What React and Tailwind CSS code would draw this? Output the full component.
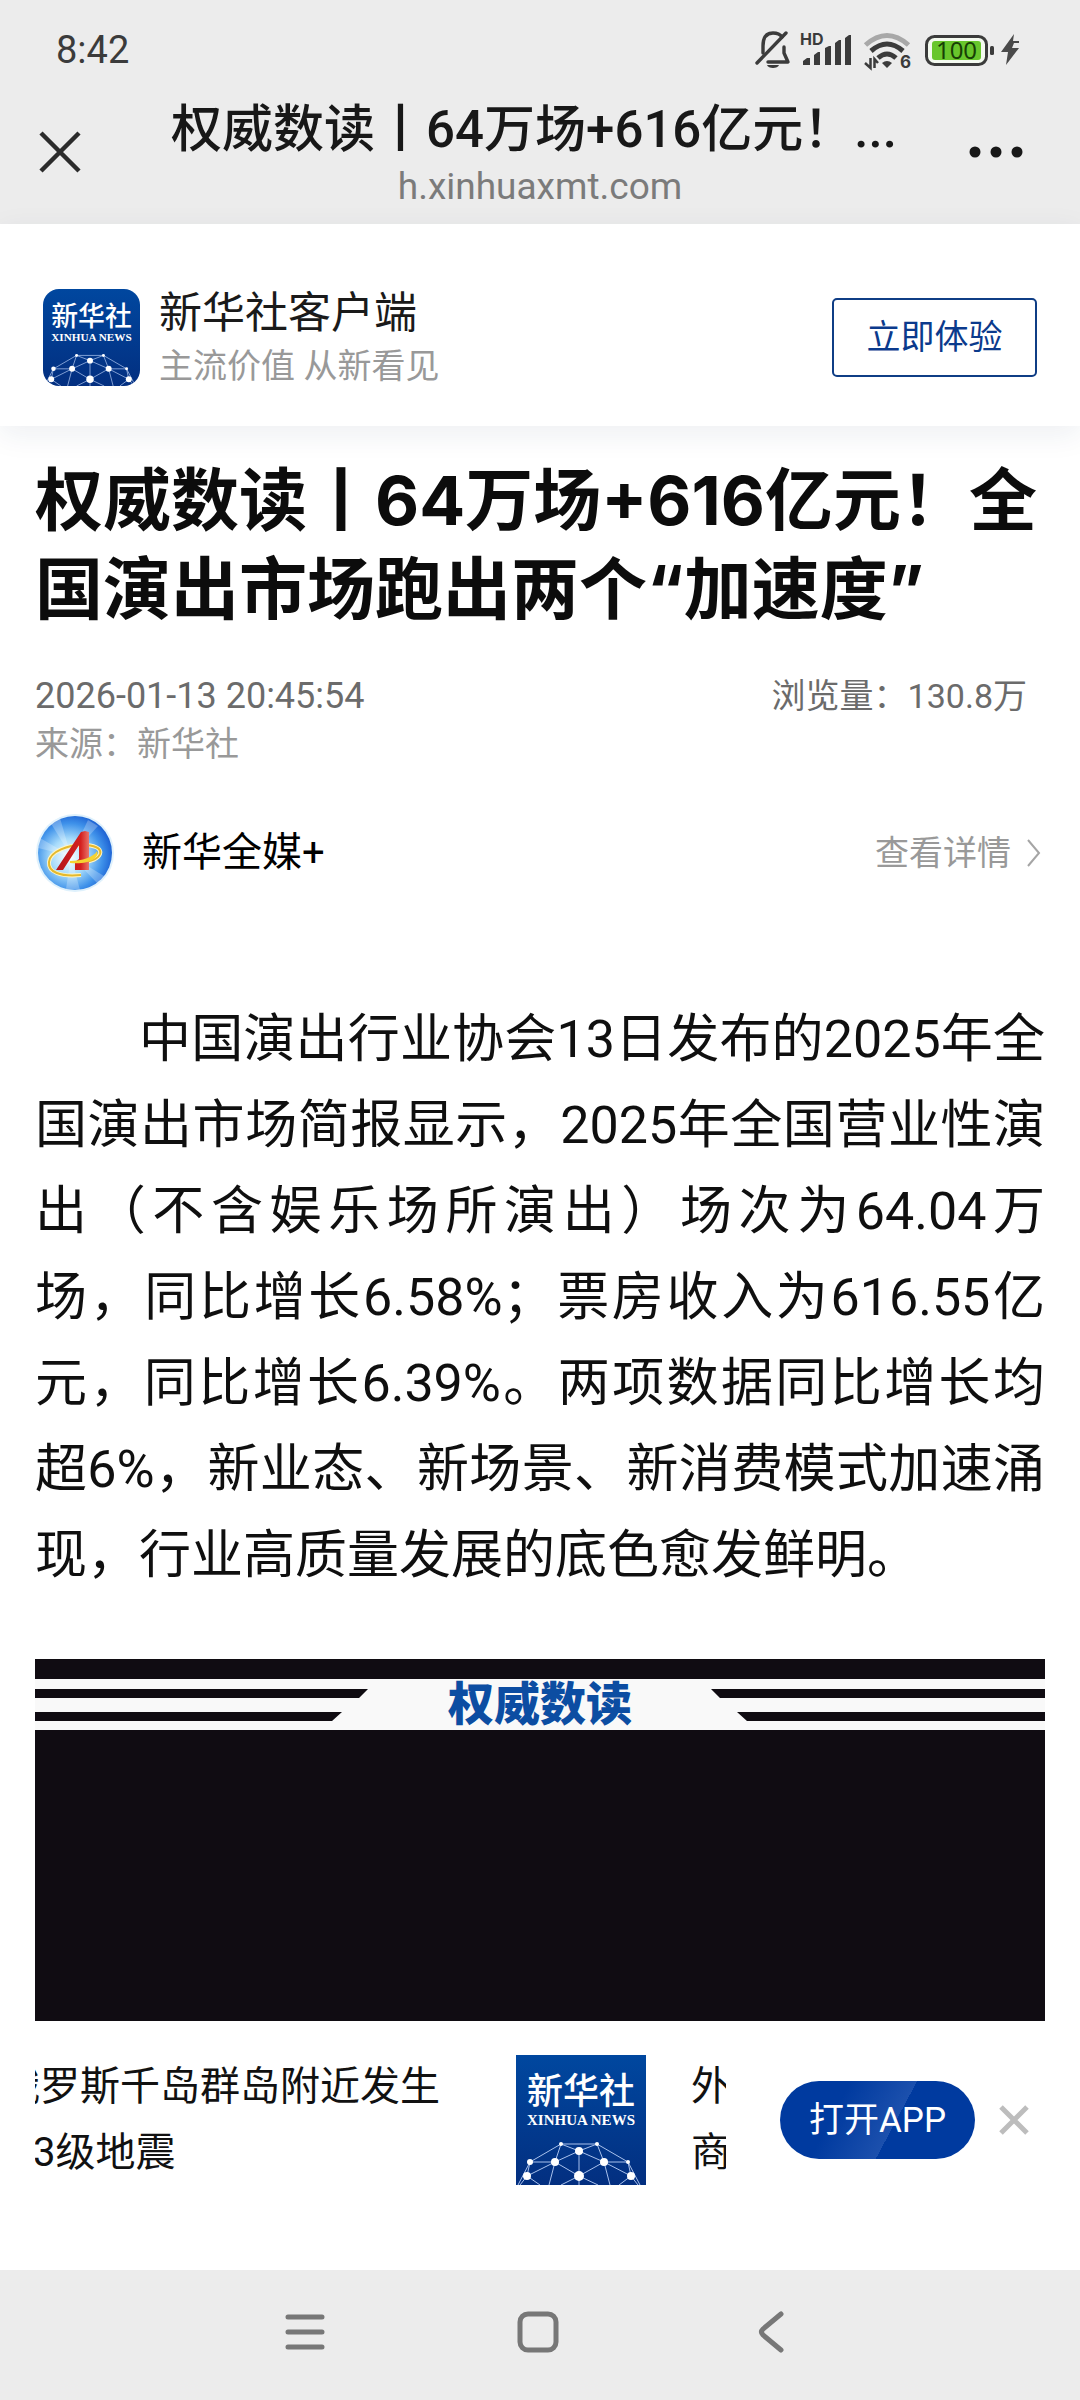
import React, { useId } from 'react';

const NODES = [
  [45, 89, 2], [81, 89, 2], [63, 96, 4], [14, 107, 3], [39, 107, 4],
  [88, 107, 4], [112, 107, 2], [11, 121, 4], [63, 121, 5], [115, 121, 4],
];

const LINKS = 'M45 89H81L112 107L124 130M45 89L14 107L2 130M14 107H39L45 89M81 89L88 107H112M63 96L39 107L33 130M63 96L88 107L94 130M63 96V130M45 89L63 96L81 89M39 107L11 121L14 107M88 107L115 121L112 107M39 107L63 121L88 107M63 121L45 130M63 121L82 130M11 121L4 130M11 121L24 130M115 121L122 130M115 121L103 130';

function XinhuaLogo({ className }) {
  const id = useId();
  return (
    <svg viewBox="0 0 130 130" className={className} role="img" aria-label="新华社">
      <defs>
        <linearGradient id={id} x1="0" y1="0" x2="0" y2="1">
          <stop offset="0" stopColor="#00479f" />
          <stop offset="1" stopColor="#032f80" />
        </linearGradient>
      </defs>
      <rect width="130" height="130" fill={`url(#${id})`} />
      <text x="65" y="49" textAnchor="middle" fontSize="36" fontWeight="500" fill="#fff" fontFamily="Noto Sans CJK SC, sans-serif">新华社</text>
      <text x="65" y="70" textAnchor="middle" fontSize="15" fontWeight="700" fill="#fff" fontFamily="Liberation Serif, serif">XINHUA NEWS</text>
      <path d={LINKS} stroke="#a9c1ec" strokeWidth="1" fill="none" />
      {NODES.map(([x, y, r]) => <circle key={`${x}-${y}`} cx={x} cy={y} r={r} fill="#fff" />)}
    </svg>
  );
}

function MediaAvatar() {
  return (
    <svg viewBox="0 0 78 78" className="size-[78px] shrink-0" role="img" aria-label="新华全媒+">
      <defs>
        <radialGradient id="sky" cx="0.42" cy="0.55" r="0.6">
          <stop offset="0" stopColor="#ffffff" />
          <stop offset="0.4" stopColor="#a8dcfb" />
          <stop offset="0.75" stopColor="#3f92ea" />
          <stop offset="1" stopColor="#1b5fd2" />
        </radialGradient>
        <linearGradient id="red" x1="0" y1="0" x2="1" y2="0">
          <stop offset="0" stopColor="#b3151c" />
          <stop offset="0.75" stopColor="#d4201f" />
          <stop offset="1" stopColor="#e9756a" />
        </linearGradient>
      </defs>
      <circle cx="39" cy="39" r="39" fill="#dff1fc" />
      <circle cx="39" cy="39" r="37" fill="url(#sky)" />
      <g fill="#fff" opacity="0.25">
        <path d="M35 42L14 8L24 4Z" />
        <path d="M35 42L4 24L2 34Z" />
        <path d="M35 42L52 6L62 12Z" />
        <path d="M35 42L30 75L44 76Z" />
        <path d="M35 42L68 62L62 70Z" />
      </g>
      <path d="M45 61C24 63 12 58 13 48C14 37 33 31 46 31C58 31 66 34 64 40C62 45 53 48 44 49" fill="none" stroke="#fff6c4" strokeWidth="4" />
      <path d="M45 61C24 63 12 58 13 48C14 37 33 31 46 31C58 31 66 34 64 40C62 45 53 48 44 49" fill="none" stroke="#e5b92e" strokeWidth="2" />
      <path d="M49 17L53 18V56H39V48L43 45V31L27 56H20L45 18Z" fill="url(#red)" />
      <path d="M34 47C46 47 58 43 61 37C64 44 53 51 34 49Z" fill="#f6d431" />
    </svg>
  );
}

function StatusIcons() {
  return (
    <svg viewBox="755 28 266 44" className="h-11 w-[266px]" aria-hidden="true">
      {/* muted bell */}
      <g fill="none" stroke="#3b3b3b" strokeWidth="3.4" strokeLinecap="round" strokeLinejoin="round">
        <path d="M763 53V46C763 37 767 33 773 33C777 33 780 34 782 37" />
        <path d="M784 47V53L788 62H768" />
        <path d="M757 63L786 33" />
      </g>
      <path d="M767 65H779C778 69 768 69 767 65Z" fill="#3b3b3b" />

      <text x="800" y="45" fontSize="16" fontWeight="700" fill="#3b3b3b" fontFamily="Inter, sans-serif">HD</text>
      <g fill="#3b3b3b">
        <path d="M803 65V61L807 58H810V65ZM814 65V55L818 52H820V65ZM825 65V48L829 46H831V65ZM835 65V43L839 40H841V65ZM845 65V38L849 35H851V65Z" />
      </g>

      {/* wifi */}
      <g fill="none" strokeWidth="5">
        <path d="M865.500 45Q887 26 908.500 45" stroke="#a8a8a8" />
        <path d="M871 51Q887 37 903 51" stroke="#3b3b3b" />
        <path d="M878 58Q887 50 896 58" stroke="#3b3b3b" />
      </g>
      <path d="M882 63Q887 59 892 63L887 68Z" fill="#3b3b3b" />
      <path d="M870.500 58V68L865 63M874.500 68V59L878 63" stroke="#3b3b3b" strokeWidth="2.500" fill="none" />
      <text x="900" y="68" fontSize="17" fontWeight="700" fill="#3b3b3b" fontFamily="Inter, sans-serif">6</text>

      {/* battery */}
      <rect x="926.500" y="36.500" width="60" height="28" rx="8" fill="#f4faf0" stroke="#3b3b3b" strokeWidth="3" />
      <rect x="932" y="41" width="49" height="19" rx="3" fill="#68c62c" />
      <rect x="990" y="46" width="4" height="9" rx="1.500" fill="#3b3b3b" />
      <text x="956.500" y="59" textAnchor="middle" fontSize="24" fill="#173f05" fontFamily="Noto Sans, sans-serif">100</text>
      <path d="M1014 34L1001 52H1008L1006 65L1019 48H1012L1014 43H1019V41H1013Z" fill="#4a4a4a" />
    </svg>
  );
}

function PhoneHeader() {
  return (
    <header className="bg-[#ececec]">
      <div className="flex h-[100px] items-center justify-between pl-14 pr-[59px]">
        <time className="text-[38px] leading-none text-[#3b3b3b]">8:42</time>
        <StatusIcons />
      </div>
      <div className="grid h-[124px] grid-cols-[1fr_auto_1fr] items-start pl-[39px] pr-[39px]">
        <button aria-label="关闭" className="mt-[31px] justify-self-start">
          <svg viewBox="0 0 42 42" className="size-[42px]" fill="none" stroke="#2b2b2b" strokeWidth="4.500">
            <path d="M2 2L40 40M40 2L2 40" />
          </svg>
        </button>
        <div className="flex flex-col items-center">
          <h2 className="pr-3 text-[51px] font-medium leading-[60px] text-[#181818]">权威数读丨64万场+616亿元！...</h2>
          <p className="text-[37px] leading-[54px] text-[#7b7b7b]">h.xinhuaxmt.com</p>
        </div>
        <button aria-label="更多" className="mr-[18px] mt-[46px] justify-self-end">
          <svg viewBox="0 0 60 12" className="h-3 w-[60px]" fill="#181818">
            <circle cx="12" cy="6" r="5.500" />
            <circle cx="33" cy="6" r="5.500" />
            <circle cx="54" cy="6" r="5.500" />
          </svg>
        </button>
      </div>
    </header>
  );
}

function AppBanner() {
  return (
    <section className="flex h-[202px] items-center justify-between bg-white px-[43px] pt-6 shadow-[0_8px_28px_rgba(30,50,90,0.08)]">
      <div className="flex items-center">
        <XinhuaLogo className="size-[97px] rounded-2xl" />
        <div className="ml-[19px] mt-1 flex flex-col">
          <span className="text-[43px] leading-[54px] text-[#1a1a1a]">新华社客户端</span>
          <span className="text-[34px] leading-[52px] text-[#999]">主流价值 从新看见</span>
        </div>
      </div>
      <button className="h-[79px] w-[205px] rounded-[5px] border-2 border-[#0f3d85] text-[34px] leading-none text-[#0b3a8c]">立即体验</button>
    </section>
  );
}

function Article() {
  return (
    <article className="px-[35px] pt-[30px]">
      <h1 className="text-[68px] font-bold leading-[89px] text-[#0c0c0c] font-['Inter','Noto_Sans_CJK_SC',sans-serif]">权威数读丨64万场+616亿元！全国演出市场跑出两个“加速度”</h1>
      <div className="mt-[38px] flex items-center justify-between pr-[18px] leading-[48px] text-[#6b6b6b]">
        <time className="text-[36px]">2026-01-13 20:45:54</time>
        <span className="text-[34px]">浏览量：130.8万</span>
      </div>
      <p className="text-[34px] leading-[48px] text-[#999]">来源：新华社</p>

      <div className="mt-[46px] flex items-center justify-between">
        <div className="flex items-center gap-[28px] pl-px">
          <MediaAvatar />
          <span className="text-[40px] leading-[60px] text-black">新华全媒+</span>
        </div>
        <a href="#detail" className="flex items-center gap-4 pr-1 text-[34px] leading-[60px] text-[#999]">
          查看详情
          <svg viewBox="0 0 14 28" className="h-7 w-[14px]" fill="none" stroke="#a5a5a5" strokeWidth="2">
            <path d="M1 1L12 14L1 27" />
          </svg>
        </a>
      </div>

      <p className="mt-[105px] indent-[104px] text-justify text-[52px] leading-[86px] text-[#0f0f0f] [text-spacing-trim:space-all]">
        中国演出行业协会13日发布的2025年全国演出市场简报显示，2025年全国营业性演出（不含娱乐场所演出）场次为64.04万场，同比增长6.58%；票房收入为616.55亿元，同比增长6.39%。两项数据同比增长均超6%，新业态、新场景、新消费模式加速涌现，行业高质量发展的底色愈发鲜明。
      </p>

      <div className="mt-[60px] h-[362px] bg-[#100c12] pt-5">
        <div className="relative flex h-[51px] items-center justify-center bg-[#f9f9f9]">
          <svg viewBox="0 0 1010 51" preserveAspectRatio="none" className="absolute inset-0 size-full" fill="#100c12">
            <path d="M0 10H333L324 19H0ZM0 33H307L297 42H0Z" />
            <path d="M1010 10H676L685 19H1010ZM1010 33H702L712 42H1010Z" />
          </svg>
          <strong className="relative text-[46px] font-black leading-[51px] text-[#0c4da2]">权威数读</strong>
        </div>
      </div>
    </article>
  );
}

function OpenAppBar() {
  return (
    <section className="flex items-center px-[35px] pb-[83px] pt-[33px]">
      <div className="flex h-[132px] flex-1 items-center overflow-hidden text-[40px] leading-[66px] text-[#111]">
        <p className="-ml-[35px] shrink-0">俄罗斯千岛群岛附近发生<br />6.3级地震</p>
        <XinhuaLogo className="ml-[76px] size-[130px] shrink-0" />
        <p className="ml-[45px] w-9 shrink-0 overflow-hidden">外商</p>
      </div>
      <button className="ml-[54px] h-[78px] w-[195px] shrink-0 rounded-full bg-[linear-gradient(118deg,#003a9f_30%,#1c50ad_58%,#003a9f_58%)] text-[35px] leading-none text-white">打开APP</button>
      <button aria-label="关闭" className="ml-6 mr-4 shrink-0">
        <svg viewBox="0 0 30 30" className="size-[30px]" fill="none" stroke="#bdbdbd" strokeWidth="5">
          <path d="M2 2L28 28M28 2L2 28" />
        </svg>
      </button>
    </section>
  );
}

function NavBar() {
  return (
    <nav className="mt-auto flex h-[130px] items-center justify-center gap-[191px] bg-[#ececec] pb-1.5 pr-1">
      <button aria-label="最近任务">
        <svg viewBox="0 0 42 42" className="size-[42px]" fill="none" stroke="#777" strokeWidth="5" strokeLinecap="round">
          <path d="M4 6H38M4 21H38M4 36H38" />
        </svg>
      </button>
      <button aria-label="主页">
        <svg viewBox="0 0 42 42" className="size-[42px]" fill="none" stroke="#777" strokeWidth="5">
          <rect x="3" y="3" width="36" height="36" rx="8" />
        </svg>
      </button>
      <button aria-label="返回">
        <svg viewBox="0 0 42 42" className="size-[42px]" fill="none" stroke="#777" strokeWidth="5" strokeLinecap="round">
          <path d="M31 3L13 18Q10 21 13 24L31 39" />
        </svg>
      </button>
    </nav>
  );
}

export default function App() {
  return (
    <div className="flex min-h-screen flex-col bg-white font-['Roboto','Noto_Sans_CJK_SC',sans-serif]" lang="zh-CN">
      <PhoneHeader />
      <AppBanner />
      <Article />
      <OpenAppBar />
      <NavBar />
    </div>
  );
}
